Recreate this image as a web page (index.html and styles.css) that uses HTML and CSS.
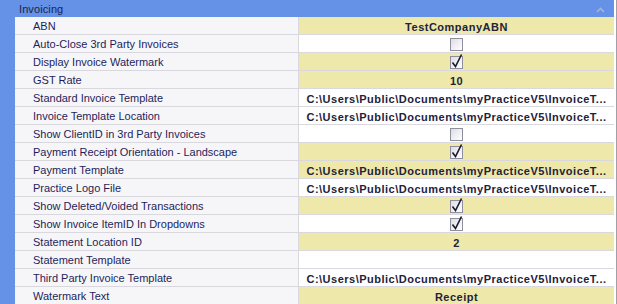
FILE: index.html
```html
<!DOCTYPE html>
<html>
<head>
<meta charset="utf-8">
<link rel="stylesheet" href="styles.css">
</head>
<body>
<div class="frame">
  <div class="grid">
    <div class="header">
      <span class="title">Invoicing</span>
      <svg class="collapse" width="9" height="6" viewBox="0 0 9 6"><path d="M1 5 L4.5 1.5 L8 5" fill="none" stroke="#a9b4c8" stroke-width="1.6"/></svg>
    </div>
    <div class="rows">
      <div class="row"><div class="label">ABN</div><div class="value mod">TestCompanyABN</div></div>
      <div class="row"><div class="label">Auto-Close 3rd Party Invoices</div><div class="value"><span class="cb"></span></div></div>
      <div class="row"><div class="label">Display Invoice Watermark</div><div class="value mod"><span class="cb"><svg class="tick" width="12" height="14" viewBox="0 0 12 14"><path d="M1.5 8.5 L4.5 12.5 L10.5 0.5" fill="none" stroke="#1a1a28" stroke-width="1.6" stroke-linejoin="miter"/></svg></span></div></div>
      <div class="row"><div class="label">GST Rate</div><div class="value mod">10</div></div>
      <div class="row"><div class="label">Standard Invoice Template</div><div class="value">C:\Users\Public\Documents\myPracticeV5\InvoiceT...</div></div>
      <div class="row"><div class="label">Invoice Template Location</div><div class="value">C:\Users\Public\Documents\myPracticeV5\InvoiceT...</div></div>
      <div class="row"><div class="label">Show ClientID in 3rd Party Invoices</div><div class="value"><span class="cb"></span></div></div>
      <div class="row"><div class="label">Payment Receipt Orientation - Landscape</div><div class="value mod"><span class="cb"><svg class="tick" width="12" height="14" viewBox="0 0 12 14"><path d="M1.5 8.5 L4.5 12.5 L10.5 0.5" fill="none" stroke="#1a1a28" stroke-width="1.6"/></svg></span></div></div>
      <div class="row"><div class="label">Payment Template</div><div class="value mod">C:\Users\Public\Documents\myPracticeV5\InvoiceT...</div></div>
      <div class="row"><div class="label">Practice Logo File</div><div class="value">C:\Users\Public\Documents\myPracticeV5\InvoiceT...</div></div>
      <div class="row"><div class="label">Show Deleted/Voided Transactions</div><div class="value mod"><span class="cb"><svg class="tick" width="12" height="14" viewBox="0 0 12 14"><path d="M1.5 8.5 L4.5 12.5 L10.5 0.5" fill="none" stroke="#1a1a28" stroke-width="1.6"/></svg></span></div></div>
      <div class="row"><div class="label">Show Invoice ItemID In Dropdowns</div><div class="value"><span class="cb"><svg class="tick" width="12" height="14" viewBox="0 0 12 14"><path d="M1.5 8.5 L4.5 12.5 L10.5 0.5" fill="none" stroke="#1a1a28" stroke-width="1.6"/></svg></span></div></div>
      <div class="row"><div class="label">Statement Location ID</div><div class="value mod">2</div></div>
      <div class="row"><div class="label">Statement Template</div><div class="value"></div></div>
      <div class="row"><div class="label">Third Party Invoice Template</div><div class="value">C:\Users\Public\Documents\myPracticeV5\InvoiceT...</div></div>
      <div class="row"><div class="label">Watermark Text</div><div class="value mod">Receipt</div></div>
    </div>
  </div>
</div>
</body>
</html>
```
FILE: styles.css
```css
html, body {
  margin: 0;
  padding: 0;
  background: #ffffff;
}
body {
  font-family: "Liberation Sans", Arial, sans-serif;
  font-size: 11px;
  color: #1e1e5a;
}
.frame {
  width: 616px;
  height: 304px;
  border-right: 1px solid #a0a0a8;
  overflow: hidden;
}
.grid {
  width: 614px;
  background: #6592e6;
}
.header {
  height: 17px;
  display: flex;
  align-items: center;
  justify-content: space-between;
  padding: 0 9px 0 19px;
}
.title {
  color: #1b1f4e;
  font-size: 11px;
  letter-spacing: 0.1px;
}
.collapse {
  margin-top: 2px;
}
.rows {
  margin-left: 15px;
}
.row {
  display: grid;
  grid-template-columns: 284px 315px;
  height: 18px;
}
.label {
  background: #f6f6f9;
  border-right: 1px solid #d8d8de;
  border-bottom: 1px solid #d8d8de;
  padding: 1px 0 0 18px;
  line-height: 16px;
  white-space: nowrap;
  overflow: hidden;
  color: #1e1e5a;
}
.value {
  background: #ffffff;
  border-bottom: 1px solid #d8d8de;
  display: flex;
  align-items: center;
  justify-content: center;
  padding-top: 2px;
  box-sizing: border-box;
  font-weight: bold;
  letter-spacing: 0.5px;
  color: #22223a;
  white-space: nowrap;
  overflow: hidden;
}
.value.mod {
  background: #eee8aa;
}
.cb {
  width: 11px;
  height: 11px;
  border: 1px solid #8e8e9c;
  background: linear-gradient(135deg, #dcdce4 0%, #f2f2f6 60%, #ffffff 100%);
  position: relative;
  margin-top: -1px;
}
.tick {
  position: absolute;
  left: 0;
  top: -3px;
}
```
